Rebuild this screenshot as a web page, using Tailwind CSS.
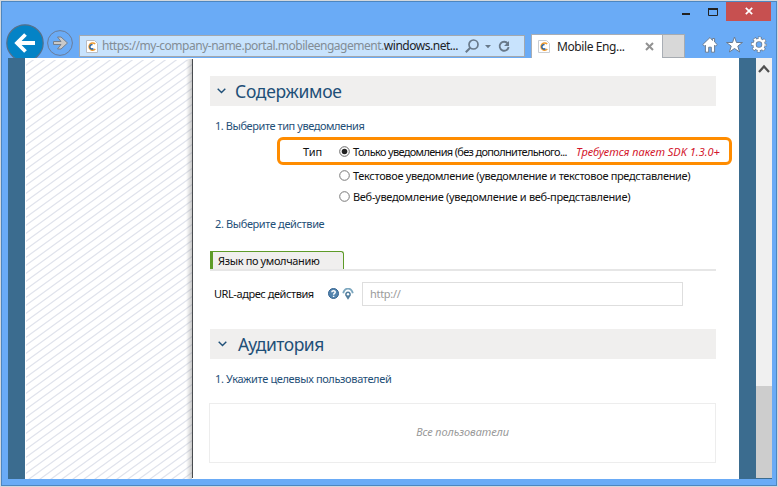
<!DOCTYPE html>
<html lang="ru">
<head>
<meta charset="utf-8">
<title>Mobile Engagement</title>
<script src="https://cdn.jsdelivr.net/npm/@tailwindcss/browser@4"></script>
</head>
<body class="w-[778px] h-[487px] overflow-hidden bg-[#d4d8dc] p-px font-['Noto_Sans','Open_Sans',sans-serif] text-[12px] leading-[16px] text-[#111]">
<div class="w-[776px] h-[485px] bg-[#6aabf6] border border-[#4d86c0] flex flex-col overflow-hidden">
  <header class="h-[56px] shrink-0 flex flex-col">
    <div class="h-[19px] flex justify-end pr-[5px] -mt-px">
      <svg class="w-[62px] h-[20px] shrink-0" viewBox="0 0 62 20"><path d="M18 13h8" stroke="#222" stroke-width="2"/><path d="M44.500 7.500h9v7h-9z" fill="none" stroke="#222"/><path d="M44 8h10" stroke="#222" stroke-width="2"/></svg>
      <div class="w-[45px] h-[20px] bg-[#c75050] shrink-0 flex items-center justify-center">
        <svg class="w-[8px] h-[8px]" viewBox="0 0 8 8"><path d="M.8.8l6.400 6.400M7.200.8L.8 7.200" stroke="#fff" stroke-width="1.700"/></svg>
      </div>
    </div>
    <div class="flex-1 flex items-end pl-[4px]">
      <div class="w-[38px] h-[34px] overflow-hidden shrink-0">
        <svg class="w-[38px] h-[38px]" viewBox="0 0 38 38"><circle cx="19" cy="19" r="18.200" fill="#0483c6" stroke="#56708a" stroke-width="1.200"/><path d="M29 19H11M19.500 10.500L11 19l8.500 8.500" fill="none" stroke="#fff" stroke-width="3.800"/></svg>
      </div>
      <svg class="w-[26px] h-[26px] ml-[3px] mb-[2px] shrink-0" viewBox="0 0 26 26"><circle cx="13" cy="13" r="12.400" fill="none" stroke="#6a7c98"/><path d="M6.500 11.500h7.500l-3.500-4.500h3.500l6.500 6-6.500 6h-3.500l3.500-4.500H6.500z" fill="#c9c9c9" stroke="#747f8e"/></svg>
      <div class="w-[446px] h-[22px] ml-[6px] mb-px border border-[#a3a8ae] bg-[#c8e3fd] flex items-center pl-[6px] shrink-0">
        <svg class="w-[12px] h-[13px] shrink-0" viewBox="0 0 12 13"><path d="M.5.5h8l3 3v9H.5z" fill="#fff" stroke="#b9bdc4"/><path d="M9.200 4A3.600 3.600 0 1 0 9.300 9" fill="none" stroke="#ee9a2e" stroke-width="1.500"/><path d="M6.500 4.700A2.200 2.200 0 1 0 7.400 8.600" fill="none" stroke="#235f9f" stroke-width="1.400"/></svg>
        <span class="ml-[4px] w-[357px] whitespace-nowrap text-[#828d96] tracking-[-0.48px]">https://my-company-name.portal.mobileengagement.<span class="text-[#1c2227]">windows.net...</span></span>
        <svg class="w-[46px] h-[16px] ml-[6px] shrink-0" viewBox="0 0 46 16"><g fill="none" stroke="#68798a"><circle cx="8.500" cy="6.500" r="4.500" stroke-width="1.700"/><path d="M5.300 9.700L.8 14.200" stroke-width="2"/><path d="M42.800 5.600A4.500 4.500 0 1 0 43.600 9" stroke-width="1.800"/></g><path d="M20 7h6l-3 3.200zM44 3v5h-5z" fill="#68798a"/></svg>
      </div>
      <div class="w-[132px] h-[24px] ml-[6px] border border-b-0 border-[#a9aeb5] bg-white flex items-center pl-[6px] shrink-0">
        <svg class="w-[12px] h-[13px] shrink-0" viewBox="0 0 12 13"><path d="M.5.5h8l3 3v9H.5z" fill="#fff" stroke="#c9cdd2"/><path d="M9.200 4A3.600 3.600 0 1 0 9.300 9" fill="none" stroke="#ee9a2e" stroke-width="1.500"/><path d="M6.500 4.700A2.200 2.200 0 1 0 7.400 8.600" fill="none" stroke="#235f9f" stroke-width="1.400"/></svg>
        <span class="ml-[7px] w-[76px] whitespace-nowrap text-[#222] tracking-[-0.4px]">Mobile Eng...</span>
        <svg class="w-[9px] h-[9px] ml-[12px]" viewBox="0 0 9 9"><path d="M1 1l7 7M8 1L1 8" stroke="#929292" stroke-width="2"/></svg>
      </div>
      <div class="w-[22px] h-[24px] border border-l-0 border-[#a6abb1] bg-[#d8d8d8] shrink-0"></div>
      <svg class="w-[66px] h-[18px] ml-[17px] mb-[4px] shrink-0" viewBox="0 0 66 18"><g fill="#fff" stroke="#6b7c91" stroke-width="1" stroke-linejoin="round"><path d="M8 1.500L.8 8.500l1.600 1.700 1-1v7h3.300v-5h2.600v5h3.300v-7l1 1 1.600-1.700-2.600-2.500V2.500h-2v2z"/><path d="M32.500 1l2 5.500h6l-4.700 3.600 1.800 5.900-5.100-3.500-5.100 3.500 1.800-5.900-4.700-3.600h6z"/></g><g fill="none"><circle cx="57" cy="8.500" r="6.400" stroke="#6b7c91" stroke-width="3.200" stroke-dasharray="3.400 1.626" stroke-dashoffset="1.700"/><circle cx="57" cy="8.500" r="4.500" stroke="#6b7c91" stroke-width="4"/><circle cx="57" cy="8.500" r="6.200" stroke="#fff" stroke-width="2.400" stroke-dasharray="2.200 2.670" stroke-dashoffset="1.100"/><circle cx="57" cy="8.500" r="4.500" stroke="#fff" stroke-width="2.500"/></g></svg>
    </div>
  </header>
  <div class="ml-[6px] w-[764px] h-[421px] flex shrink-0 bg-white">
    <div class="w-[17px] bg-[#3b6c8f]"></div>
    <svg class="w-[168px] h-[421px] shrink-0" viewBox="0 0 168 421"><defs><pattern id="hatch" width="11" height="8" patternUnits="userSpaceOnUse"><path d="M-2 9.450L13-1.450M-2 1.450L2-1.450M9 9.450L13 6.550" stroke="#e0e3ec" stroke-width="1.300"/></pattern><linearGradient id="edge"><stop offset="0" stop-color="#888" stop-opacity="0"/><stop offset="1" stop-color="#777" stop-opacity=".4"/></linearGradient></defs><path d="M1 2h166v419H1z" fill="url(#hatch)"/><path d="M161 1h6v420h-6z" fill="url(#edge)"/><path d="M167.500 1v419" stroke="#484b4e"/></svg>
    <main class="w-[546px] pl-[17px] flex flex-col text-[11px]">
      <h2 class="mt-[18px] w-[506px] h-[30px] bg-[#f0efee] flex items-center text-[17.500px] leading-[30px] text-[#1f5078] shrink-0">
        <svg class="w-[9px] h-[6px] ml-[7px]" viewBox="0 0 9 6"><path d="M.7.8l3.800 3.800L8.300.8" fill="none" stroke="#1f5078" stroke-width="1.400"/></svg><span class="ml-[9px] tracking-[-0.3px]">Содержимое</span>
      </h2>
      <p class="mt-[12px] ml-[5px] text-[#1f5078] tracking-[-0.43px]">1. Выберите тип уведомления</p>
      <div class="ml-[67px] mt-[3px] w-[455px] h-[28px] pt-px border-[3px] border-[#ff8c00] rounded-[6px] flex items-center whitespace-nowrap">
        <span class="ml-[23px] w-[36px] tracking-[-0.1px]">Тип</span>
        <svg class="w-[11px] h-[11px] shrink-0" viewBox="0 0 11 11"><circle cx="5.500" cy="5.500" r="4.800" fill="#fff" stroke="#666"/><circle cx="5.500" cy="5.500" r="2.800" fill="#222"/></svg>
        <span class="ml-[3px] w-[223px] tracking-[-0.67px]">Только уведомления (без дополнительного...</span>
        <i class="text-[#d3152c]">Требуется пакет SDK 1.3.0+</i>
      </div>
      <div class="ml-[129px] h-[21px] flex items-center whitespace-nowrap"><svg class="w-[11px] h-[11px]" viewBox="0 0 11 11"><circle cx="5.500" cy="5.500" r="4.800" fill="#fff" stroke="#777"/></svg><span class="ml-[3px] tracking-[-0.33px]">Текстовое уведомление (уведомление и текстовое представление)</span></div>
      <div class="ml-[129px] h-[21px] flex items-center whitespace-nowrap"><svg class="w-[11px] h-[11px]" viewBox="0 0 11 11"><circle cx="5.500" cy="5.500" r="4.800" fill="#fff" stroke="#777"/></svg><span class="ml-[3px] tracking-[-0.3px]">Веб-уведомление (уведомление и веб-представление)</span></div>
      <p class="mt-[9px] ml-[5px] text-[#1f5078] tracking-[-0.38px]">2. Выберите действие</p>
      <div class="mt-[19px] w-[506px] h-[20px] border-b-2 border-[#e6e6e6] flex"><div class="w-[134px] h-[18px] border-t border-r border-l-[3px] border-[#5e9b28] rounded-tr-[3px] bg-[#f0efee] pl-[5px] leading-[18px] tracking-[-0.36px]">Язык по умолчанию</div></div>
      <div class="mt-[11px] ml-[4px] flex items-center h-[24px]">
        <span class="w-[114px] whitespace-nowrap tracking-[-0.43px]">URL-адрес действия</span>
        <svg class="w-[26px] h-[12px]" viewBox="0 0 26 12"><circle cx="5.500" cy="5.500" r="5" fill="#5384ae" stroke="#346390"/><path d="M3.800 4.300C3.900 2.100 7.300 2.300 7.200 4.200 7.100 5.500 5.600 5.400 5.600 6.800M5.600 7.800v1.300" fill="none" stroke="#fff" stroke-width="1.500"/><path d="M15.200 5.200C16.800-.8 23.200-.8 24.800 5.200" fill="none" stroke="#7ba6be" stroke-width="1.800"/><path d="M20 11.800L17.300 7.500A2.900 2.900 0 1 1 22.700 7.500z" fill="#547f9e"/><circle cx="20" cy="6.300" r="1.200" fill="#fff"/></svg>
        <div class="ml-[8px] w-[321px] h-[24px] border border-[#dedede] pl-[7px] leading-[22px] text-[#9b9b9b] tracking-[-0.3px]">http://</div>
      </div>
      <h2 class="mt-[23px] w-[506px] h-[30px] bg-[#f0efee] flex items-center text-[17.500px] leading-[30px] text-[#1f5078] shrink-0">
        <svg class="w-[9px] h-[6px] ml-[8px]" viewBox="0 0 9 6"><path d="M.7.8l3.800 3.800L8.300.8" fill="none" stroke="#1f5078" stroke-width="1.400"/></svg><span class="ml-[11px] tracking-[-0.5px]">Аудитория</span>
      </h2>
      <p class="mt-[12px] ml-[5px] text-[#1f5078] tracking-[-0.36px]">1. Укажите целевых пользователей</p>
      <div class="mt-[16px] -ml-px w-[507px] h-[60px] border border-[#ededed] flex items-center justify-center text-[#999] italic tracking-[-0.1px] pb-[3px]">Все пользователи</div>
    </main>
    <div class="w-[17px] bg-[#3b6c8f]"></div>
    <div class="w-[16px] bg-[#f0f0f0] flex flex-col justify-between border-b border-[#3b6c8f]"><svg class="w-[16px] h-[20px]" viewBox="0 0 16 20"><path d="M3 14l5-5.500 5 5.500" fill="none" stroke="#505050" stroke-width="2.200"/></svg><div class="h-[92px] bg-[#cdcdcd]"></div></div>
  </div>
</div>
</body>
</html>
